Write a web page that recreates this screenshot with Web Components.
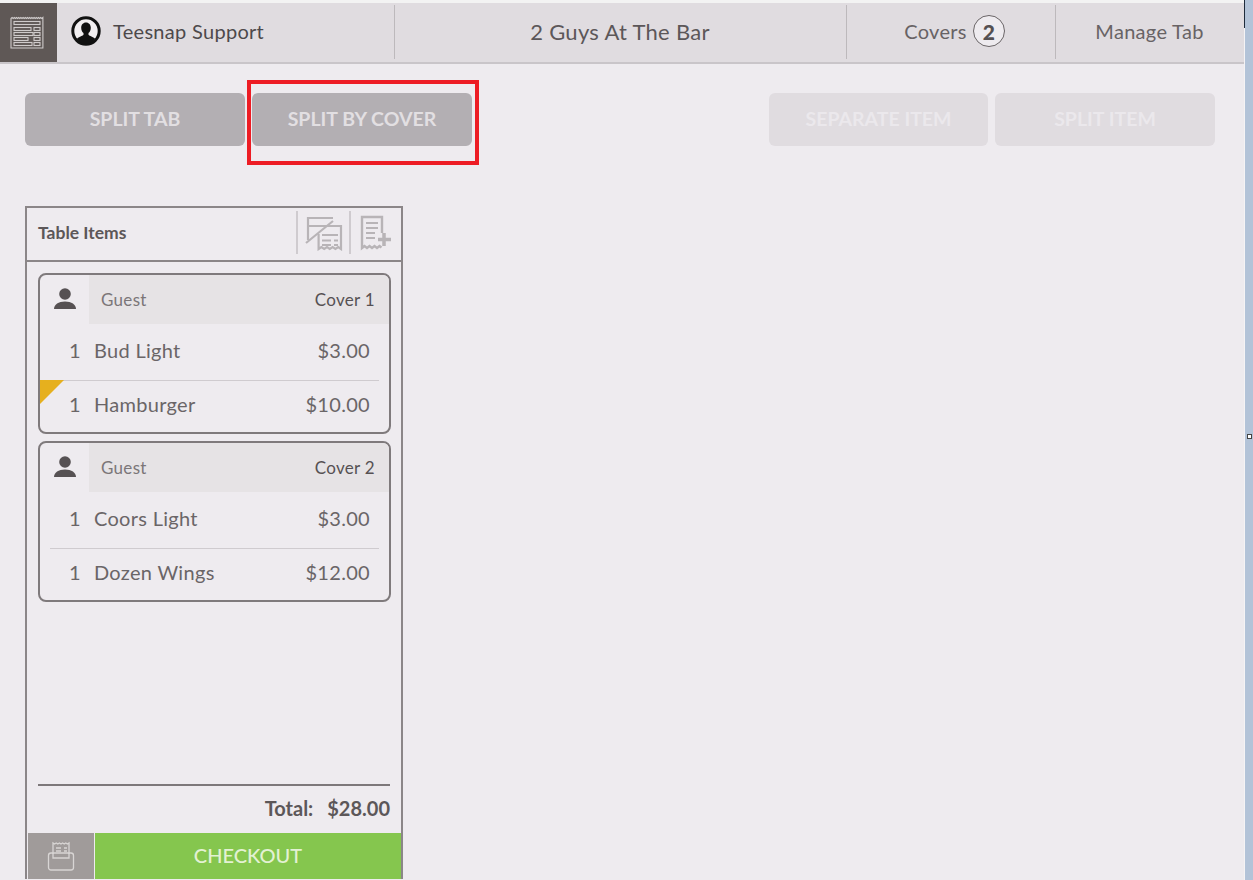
<!DOCTYPE html>
<html lang="en">
<head>
<meta charset="utf-8">
<title>Split tab</title>
<style>
  html, body { margin: 0; height: 100%; overflow: hidden; }
  body { font-family: Lato, "Open Sans", sans-serif; background: #eeebef; color: #5c5759; }
</style>
</head>
<body>
<tab-screen></tab-screen>

<script>
/**
 * Small helper, every element below builds its shadow root the same way.
 */
const makeTemplate = (html) => {
  const template = document.createElement('template')
  template.innerHTML = html
  return template
}

const defineElement = (name, html) => {
  const template = makeTemplate(html)
  customElements.define(name, class extends HTMLElement {
    constructor () {
      super()
      this.attachShadow({ mode: 'open' }).appendChild(template.content.cloneNode(true))
    }
  })
}

// Top bar with the menu button and the four cells.
defineElement('top-bar', `
  <style>
    :host { display: flex; height: 59px; background: #e0dce0; border-bottom: 2px solid #c9c5c9; }
    .menu { width: 57px; background: #5f5856; display: flex; align-items: center; justify-content: center; padding-right: 3px; box-sizing: border-box; }
    .cell { display: flex; align-items: center; position: relative; font-size: 20px; letter-spacing: .3px; color: #686365; justify-content: center; padding-bottom: 3px; box-sizing: border-box; }
    .cell + .cell::before { content: ''; position: absolute; left: 0; top: 2px; bottom: 3px; width: 1px; background: #bdb9bc; }
    .user { width: 337px; justify-content: flex-start; padding-left: 14px; gap: 12px; color: #4d494b; }
    .title { width: 452px; font-size: 22px; color: #5c5759; }
    .covers { width: 209px; gap: 6px; padding-left: 8px; }
    .manage { width: 189px; }
    .count { width: 32px; height: 32px; box-sizing: border-box; border: 1.5px solid #6a6567; border-radius: 50%; background: #eeebef;
      display: flex; align-items: center; justify-content: center; font-weight: 900; font-size: 21px; color: #555052; letter-spacing: 0; }
  </style>
  <div class="menu">
    <svg width="36" height="36" viewBox="0 0 36 36" fill="none" stroke="#cfcbcb" stroke-width="1.100">
      <path d="M2 3.500l1.100-1 1.100 1 1.100-1 1.100 1 1.100-1 1.100 1 1.100-1 1.100 1 1.100-1 1.100 1 1.100-1 1.100 1 1.100-1 1.100 1 1.100-1 1.100 1 1.100-1 1.100 1 1.100-1 1.100 1 1.100-1 1.100 1 1.100-1 1.100 1 1.100-1 1.100 1 1.100-1 1.100 1 1.100-1V33H2z"/>
      <rect x="5" y="6.500" width="26" height="3"/>
      <rect x="5" y="12.500" width="17" height="3"/><rect x="25" y="12.500" width="6" height="3"/>
      <rect x="5" y="17.500" width="19" height="3"/><rect x="25" y="17.500" width="6" height="3"/>
      <rect x="5" y="22.500" width="14" height="3"/><rect x="25" y="22.500" width="6" height="3"/>
      <rect x="5" y="27.500" width="18" height="3"/><rect x="25" y="27.500" width="6" height="3"/>
    </svg>
  </div>
  <div class="cell user">
    <svg width="30" height="30" viewBox="0 0 30 30">
      <circle cx="15" cy="15" r="13.200" fill="#f2eff1" stroke="#111" stroke-width="3"/>
      <path d="M15 6.500c3 0 4.800 2.300 4.800 5.200 0 2.400-1 4.300-2.300 5.400v1.600c0 .8 3.500 1.600 5.800 3.200a2 2 0 0 1 .7 1.200A13 13 0 0 1 15 28a13 13 0 0 1-9-4.900c.1-.5.3-.9.7-1.200 2.300-1.600 5.800-2.400 5.800-3.200v-1.600c-1.300-1.100-2.300-3-2.300-5.400 0-2.900 1.800-5.200 4.800-5.200z" fill="#111"/>
    </svg>
    <span>Teesnap Support</span>
  </div>
  <div class="cell title">2 Guys At The Bar</div>
  <div class="cell covers"><span>Covers</span><span class="count">2</span></div>
  <div class="cell manage">Manage Tab</div>
`)

// Grey action button, the "off" attribute gives the faded version.
defineElement('action-button', `
  <style>
    :host { display: flex; width: 220px; height: 53px; align-items: center; justify-content: center; border-radius: 6px;
      background: #b3afb3; color: #e2dfe2; font-size: 19.500px; font-weight: 700; letter-spacing: 0; position: relative; padding-bottom: 3px; box-sizing: border-box; }
    :host([off]) { background: #e0dce0; color: #ebe8ec; }
  </style>
  <slot></slot>
`)

// One order line. Quantity, name, price.
defineElement('order-line', `
  <style>
    :host { display: flex; align-items: center; height: 56px; font-size: 20px; letter-spacing: .3px; color: #6a6567; position: relative; box-sizing: border-box; padding: 0 19px 4px 0; }
    :host([divider]) { height: 53px; border-top: 1px solid #cfcbcf; margin-left: 10px; margin-right: 10px; padding-right: 9px; padding-bottom: 7px; }
    :host([divider]) .qty { width: 31px; }
    .qty { width: 41px; text-align: right; flex: none; }
    .name { margin-left: 13px; flex: 1; }
    .flag { display: none; position: absolute; left: -10px; top: -1px; width: 0; height: 0;
      border-top: 24px solid #e6b01e; border-right: 24px solid transparent; }
    :host([flag]) .flag { display: block; }
  </style>
  <span class="flag"></span>
  <span class="qty"><slot name="qty"></slot></span>
  <span class="name"><slot name="name"></slot></span>
  <slot name="price"></slot>
`)

// Guest card, a rounded box with a header row and its lines.
defineElement('guest-card', `
  <style>
    :host { display: block; border: 2px solid #7f7a7c; border-radius: 8px; overflow: hidden; box-sizing: border-box; height: 161px; }
    .head { display: flex; height: 49px; }
    .who { width: 49px; flex: none; display: flex; align-items: center; justify-content: center; padding-bottom: 2px; box-sizing: border-box; }
    .label { flex: 1; background: #e6e3e5; display: flex; align-items: center; justify-content: space-between; padding: 0 14px 1px 12px; font-size: 17px; letter-spacing: .3px; color: #7b7678; }
    .cover { color: #565153; }
  </style>
  <div class="head">
    <div class="who">
      <svg width="24" height="22" viewBox="0 0 24 22" fill="#565153">
        <circle cx="12" cy="6" r="5.800"/>
        <path d="M1 21c0-4.500 4.500-7.500 11-7.500S23 16.500 23 21z"/>
      </svg>
    </div>
    <div class="label"><span>Guest</span><span class="cover"><slot name="cover"></slot></span></div>
  </div>
  <slot></slot>
`)

// Left panel with the table items and the checkout row.
defineElement('items-panel', `
  <style>
    :host { display: flex; flex-direction: column; width: 378px; height: 673px; box-sizing: border-box;
      border: 2px solid #8b8688; border-bottom: 0; }
    header { display: flex; align-items: center; height: 54px; flex: none; box-sizing: border-box; border-bottom: 2px solid #8b8688; padding: 0 0 3px 11px; font-size: 17.500px; font-weight: 700; color: #5c5759; }
    header span { flex: 1; }
    .tool { width: 53px; height: 43px; border-left: 2px solid #cfcbcf; display: flex; align-items: center; justify-content: center; box-sizing: border-box; }
    .tool + .tool { width: 52px; }
    .list { flex: 1; padding: 11px 10px 0 11px; display: flex; flex-direction: column; gap: 7px; }
    .total { margin: 0 11px 0 11px; height: 49px; border-top: 2px solid #7d787a; display: flex; align-items: center; justify-content: flex-end; gap: 14px; font-size: 20px; font-weight: 700; color: #5c5759; flex: none; box-sizing: border-box; padding-bottom: 3px; }
    .pay { display: flex; height: 46px; flex: none; gap: 1px; padding-left: 1px; }
    .print { width: 66px; background: #a09b9a; display: flex; align-items: center; justify-content: center; padding-bottom: 1px; box-sizing: border-box; }
    .checkout { flex: 1; background: #85c64e; color: #e3f1d3; font-size: 20px; font-weight: 500; display: flex; align-items: center; justify-content: center; padding-bottom: 2px; }
  </style>
  <header>
    <span>Table Items</span>
    <div class="tool">
      <svg width="38" height="36" viewBox="0 0 38 36" fill="none" stroke="#b8b4b7" stroke-width="2.200">
        <path d="M3 25V3h25M1 28L28 6"/>
        <path d="M4 11h32v23l-2.800-2-2.800 2-2.800-2-2.800 2-2.800-2-2.800 2-2.800-2-2.800 2V19"/>
        <path d="M17 20h16M17 25.500h9M29 25.500h4M17 30h9M29 30h4" stroke-width="2"/>
      </svg>
    </div>
    <div class="tool">
      <svg width="32" height="36" viewBox="0 0 32 36" fill="none" stroke="#b8b4b7" stroke-width="2.400">
        <path d="M22 18V2H2v31l2.500-2 2.500 2 2.500-2 2.500 2 2.500-2 2.500 2 2.500-2 2 1.500"/>
        <path d="M6 8h12M6 13h12M6 18h9M6 23h9" stroke-width="2"/>
        <path d="M24 18v13M18 24.500h13" stroke-width="3.500"/>
      </svg>
    </div>
  </header>
  <div class="list"><slot></slot></div>
  <div class="total"><span>Total:</span><span>$28.00</span></div>
  <div class="pay">
    <div class="print">
      <svg width="28" height="30" viewBox="0 0 28 30" fill="none" stroke="#d8d5d4" stroke-width="1.300">
        <path d="M6 13V2l1.600 1 1.600-1 1.600 1 1.600-1 1.600 1 1.600-1 1.600 1 1.600-1 1.600 1 1.600-1V13"/>
        <path d="M9 7h5M9 10h5M17 7h3M17 10h3"/>
        <rect x="1.500" y="12" width="25" height="17" rx="2.500"/>
        <path d="M6 12v5h16v-5"/>
      </svg>
    </div>
    <div class="checkout">CHECKOUT</div>
  </div>
`)

// The whole screen, plus the window edge seen on the right of the capture.
defineElement('tab-screen', `
  <style>
    :host { display: flex; width: 1253px; height: 880px; background: #eeebef; overflow: hidden; }
    .app { width: 1244px; flex: none; padding-top: 3px; box-sizing: border-box; background: linear-gradient(#f3f3f3 3px, #eeebef 3px); }
    .gap { width: 1px; flex: none; background: linear-gradient(#1f2c3c 28px, #f5f3f5 28px); }
    .edge { flex: 1; background: #b3c3d8; position: relative; }
    .handle { position: absolute; left: 2px; top: 434px; width: 3px; height: 3px; border: 1px solid #444; background: #fff; }
    .actions { display: flex; gap: 7px; padding: 29px 0 0 25px; }
    .spacer { width: 283px; }
    .mark { position: absolute; left: -5px; top: -13px; width: 224px; height: 77px; border: 4px solid #ed1c24; pointer-events: none; }
    .content { padding: 60px 0 0 25px; }
  </style>
  <div class="app">
    <top-bar></top-bar>
    <div class="actions">
      <action-button>SPLIT TAB</action-button>
      <action-button>SPLIT BY COVER<span class="mark"></span></action-button>
      <div class="spacer"></div>
      <action-button off style="width:219px">SEPARATE ITEM</action-button>
      <action-button off>SPLIT ITEM</action-button>
    </div>
    <div class="content">
      <items-panel>
        <guest-card>
          <span slot="cover">Cover 1</span>
          <order-line><span slot="qty">1</span><span slot="name">Bud Light</span><span slot="price">$3.00</span></order-line>
          <order-line divider flag><span slot="qty">1</span><span slot="name">Hamburger</span><span slot="price">$10.00</span></order-line>
        </guest-card>
        <guest-card>
          <span slot="cover">Cover 2</span>
          <order-line><span slot="qty">1</span><span slot="name">Coors Light</span><span slot="price">$3.00</span></order-line>
          <order-line divider><span slot="qty">1</span><span slot="name">Dozen Wings</span><span slot="price">$12.00</span></order-line>
        </guest-card>
      </items-panel>
    </div>
  </div>
  <div class="gap"></div>
  <div class="edge"><span class="handle"></span></div>
`)
</script>
</body>
</html>
